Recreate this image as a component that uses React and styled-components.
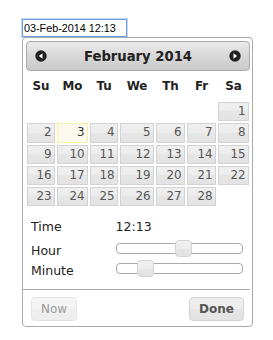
import styled, { createGlobalStyle, css } from 'styled-components';

const GlobalStyle = createGlobalStyle`
  body {
    margin: 0;
    background: #fff;
    font-family: "DejaVu Sans", Verdana, sans-serif;
  }
`;

const Page = styled.div`
  padding: 19px 0 0 22px;
`;

const DateInput = styled.input`
  display: block;
  box-sizing: border-box;
  width: 105px;
  height: 18px;
  margin: 0;
  padding: 0 0 0 1px;
  border: 1px solid #6d9de2;
  box-shadow: 0 0 0 1px #c2d8f6;
  outline: none;
  font: 10.8px "Liberation Sans", Arial, sans-serif;
  color: #000;
`;

const Picker = styled.div`
  box-sizing: border-box;
  width: 231px;
  padding: 3px 2px 0 3px;
  border: 1px solid #aaa;
  border-radius: 4px;
  background: #fff;
  color: #222;
`;

const Header = styled.div`
  box-sizing: border-box;
  height: 30px;
  display: flex;
  align-items: center;
  justify-content: space-between;
  padding: 0 2px;
  border: 1px solid #aaa;
  border-radius: 4px;
  background: linear-gradient(to bottom, #ebebeb 0%, #d8d8d8 50%, #cbcbcb 100%);
`;

const NavButton = styled.span`
  width: 24px;
  height: 24px;
  display: flex;
  align-items: center;
  justify-content: center;
`;

const Title = styled.div`
  font-size: 13.2px;
  font-weight: bold;
  color: #222;
`;

const Calendar = styled.table`
  width: 100%;
  table-layout: fixed;
  border-collapse: collapse;
  font-size: 11.88px;
  margin: 0;
`;

const Col = styled.col`
  width: ${(p) => p.$w}px;
`;

const DayName = styled.th`
  padding: 8px 0;
  line-height: 14px;
  font-weight: bold;
  text-align: center;
  color: #222;
`;

const Cell = styled.td`
  padding: 1px;
`;

const DayLink = styled.a`
  display: block;
  padding: 2px 2.5px 2px 0;
  line-height: 13.3px;
  text-align: right;
  text-decoration: none;
  border: 1px solid #d3d3d3;
  color: #555;
  background: linear-gradient(to bottom, #efefef 0%, #ececec 50%, #e6e6e6 50%, #e3e3e3 100%);
  ${(p) =>
    p.$today &&
    css`
      border-color: #fcefa1;
      background: #fbf9ee;
      color: #363636;
    `}
`;

const TimeSection = styled.div`
  padding-top: 12px;
`;

const TimeRow = styled.div`
  display: flex;
  align-items: flex-start;
  margin-bottom: ${(p) => p.$gap}px;
`;

const Label = styled.div`
  box-sizing: border-box;
  width: 40%;
  padding-left: 5px;
  font-size: 12.5px;
  line-height: 15px;
  color: #222;
`;

const Value = styled.div`
  font-size: 12.5px;
  line-height: 15px;
  color: #222;
`;

const Track = styled.div`
  position: relative;
  flex: 1;
  box-sizing: border-box;
  height: 11px;
  margin-right: 7px;
  border: 1px solid #aaa;
  border-radius: 4px;
  background: #fff;
`;

const Handle = styled.span`
  position: absolute;
  top: -4px;
  box-sizing: border-box;
  width: 17px;
  height: 17px;
  margin-left: -7px;
  border: 1px solid #d3d3d3;
  border-radius: 4px;
  background: linear-gradient(to bottom, #f1f1f1 0%, #ececec 50%, #e6e6e6 50%, #e2e2e2 100%);
`;

const ButtonPane = styled.div`
  display: flex;
  justify-content: space-between;
  margin-left: -3px;
  padding: 7px 6px 5px 8px;
  border-top: 1px solid #aaa;
`;

const Button = styled.button`
  margin: 0;
  padding: 4px 9px;
  font-family: "DejaVu Sans", Verdana, sans-serif;
  font-size: 12px;
  line-height: 14px;
  font-weight: ${(p) => (p.$primary ? 'bold' : 'normal')};
  color: #555;
  border: 1px solid #d3d3d3;
  border-radius: 4px;
  background: linear-gradient(to bottom, #efefef 0%, #ececec 50%, #e6e6e6 50%, #e3e3e3 100%);
  opacity: ${(p) => (p.$disabled ? 0.6 : 1)};
`;

function CircleArrow({ dir }) {
  const pts = dir === 'w' ? '9.5,5.2 9.5,10.8 5.9,8' : '6.5,5.2 6.5,10.8 10.1,8';
  return (
    <svg width="16" height="16" viewBox="0 0 16 16">
      <circle cx="8" cy="8" r="5.7" fill="#222" />
      <polygon points={pts} fill="#fff" />
    </svg>
  );
}

const widths = [30, 33, 30, 36, 31, 31, 33];
const dayNames = ['Su', 'Mo', 'Tu', 'We', 'Th', 'Fr', 'Sa'];

const weeks = [
  [null, null, null, null, null, null, 1],
  [2, 3, 4, 5, 6, 7, 8],
  [9, 10, 11, 12, 13, 14, 15],
  [16, 17, 18, 19, 20, 21, 22],
  [23, 24, 25, 26, 27, 28, null],
];

function Slider({ value, max }) {
  return (
    <Track>
      <Handle style={{ left: `${(value / max) * 100}%` }} />
    </Track>
  );
}

export default function App() {
  return (
    <Page>
      <GlobalStyle />
      <DateInput readOnly value="03-Feb-2014 12:13" />
      <Picker>
        <Header>
          <NavButton>
            <CircleArrow dir="w" />
          </NavButton>
          <Title>February 2014</Title>
          <NavButton>
            <CircleArrow dir="e" />
          </NavButton>
        </Header>
        <Calendar>
          <colgroup>
            {widths.map((w, i) => (
              <Col key={i} $w={w} />
            ))}
          </colgroup>
          <thead>
            <tr>
              {dayNames.map((d) => (
                <DayName key={d}>{d}</DayName>
              ))}
            </tr>
          </thead>
          <tbody>
            {weeks.map((week, wi) => (
              <tr key={wi}>
                {week.map((day, di) => (
                  <Cell key={di}>
                    {day && <DayLink $today={day === 3}>{day}</DayLink>}
                  </Cell>
                ))}
              </tr>
            ))}
          </tbody>
        </Calendar>
        <TimeSection>
          <TimeRow $gap={8.5}>
            <Label>Time</Label>
            <Value>12:13</Value>
          </TimeRow>
          <TimeRow $gap={5}>
            <Label>Hour</Label>
            <Slider value={12} max={23} />
          </TimeRow>
          <TimeRow $gap={11}>
            <Label>Minute</Label>
            <Slider value={13} max={59} />
          </TimeRow>
        </TimeSection>
        <ButtonPane>
          <Button $disabled>Now</Button>
          <Button $primary>Done</Button>
        </ButtonPane>
      </Picker>
    </Page>
  );
}
